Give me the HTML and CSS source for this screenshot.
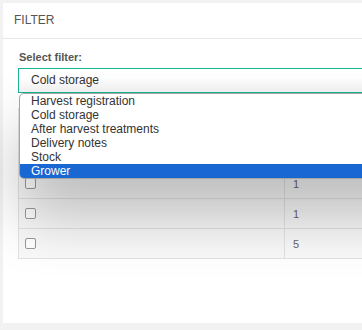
FILE: index.html
```html
<!DOCTYPE html>
<html lang="en">
<head>
  <meta charset="UTF-8">
  <meta name="viewport" content="width=device-width, initial-scale=1.0">
  <title>Filter</title>
  <link rel="stylesheet" href="styles.css">
</head>
<body>
  <div class="panel">
    <div class="panel-head">FILTER</div>
    <div class="panel-body">
      <label class="field-label">Select filter:</label>
      <div class="select-wrap">
        <div class="select-box">Cold storage</div>
        <!-- Liste ouverte du select -->
        <ul class="dropdown">
          <li>Harvest registration</li>
          <li>Cold storage</li>
          <li>After harvest treatments</li>
          <li>Delivery notes</li>
          <li>Stock</li>
          <li class="active">Grower</li>
        </ul>
      </div>
      <table class="grid">
        <tr><th><span class="check"></span></th><th>Qty</th></tr>
        <tr><td><span class="check"></span></td><td>2</td></tr>
        <tr><td><span class="check"></span></td><td>1</td></tr>
        <tr><td><span class="check"></span></td><td>1</td></tr>
        <tr><td><span class="check"></span></td><td>5</td></tr>
      </table>
    </div>
  </div>
</body>
</html>
```

FILE: styles.css
```css
* {
  box-sizing: border-box;
  margin: 0;
  padding: 0;
}
html {
  overflow: hidden;
}
body {
  font-family: 'Liberation Sans', Arial, sans-serif;
  background-color: #f2f2f2;
  padding: 3px 0 0 3px;
  width: 460px;
}
.panel {
  background-color: #fff;
  width: 440px;
  height: 320px;
}
.panel-head {
  height: 36px;
  line-height: 34px;
  padding: 0 11px;
  font-size: 12px;
  color: #555;
  border-bottom: 1px solid #e7e7e7;
}
.panel-body {
  padding: 11px 15px 0 15px;
}
.field-label {
  display: block;
  font-size: 11px;
  font-weight: bold;
  color: #555;
  line-height: 14px;
  margin-left: 1px;
}
.select-wrap {
  position: relative;
  margin-top: 4px;
}
.select-box {
  height: 25px;
  line-height: 23px;
  border: 1px solid #1ab394;
  padding: 0 12px;
  font-size: 12px;
  color: #333;
  background: linear-gradient(#fff 40%, #f3f3f3);
}
/* Liste deroulante ouverte */
.dropdown {
  position: absolute;
  top: 25px;
  left: 1px;
  right: -20px;
  list-style: none;
  background-color: #fff;
  border: 1px solid #a5a5a5;
  border-radius: 5px 0 0 5px;
  box-shadow: 0 35px 60px rgba(0,0,0,0.25);
  overflow: hidden;
  z-index: 2;
}
.dropdown li {
  height: 14px;
  line-height: 14px;
  padding-left: 11px;
  font-size: 12px;
  color: #333;
}
.dropdown li.active {
  background-color: #1967d2;
  color: #fff;
}
.grid {
  margin-top: 15px;
  width: 420px;
  border-collapse: collapse;
  font-size: 11px;
  color: #666;
}
.grid th, .grid td {
  height: 30px;
  border: 1px solid #e2e2e2;
  background-color: #f9f9f9;
  text-align: left;
  font-weight: normal;
  vertical-align: middle;
}
.grid th:first-child, .grid td:first-child {
  width: 266px;
  padding-left: 6px;
}
.grid th:last-child, .grid td:last-child {
  padding-left: 8px;
}
.check {
  display: block;
  width: 11px;
  height: 11px;
  border: 1px solid #999;
  border-radius: 2px;
  background-color: #fff;
}
```
